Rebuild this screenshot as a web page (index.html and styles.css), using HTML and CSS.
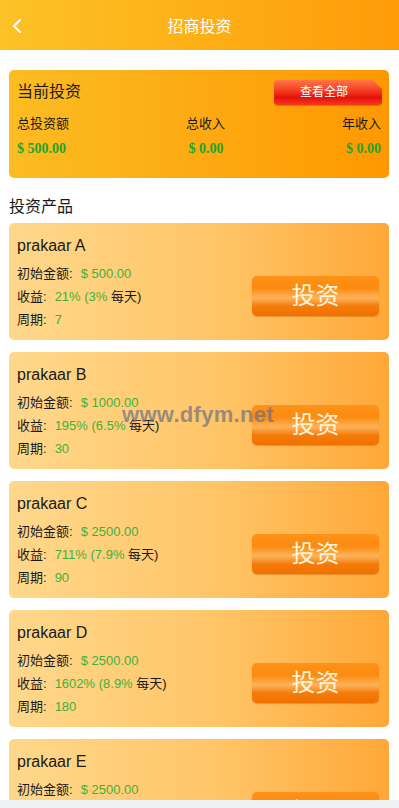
FILE: index.html
```html
<!DOCTYPE html>
<html lang="zh-CN">
<head>
<meta charset="utf-8">
<title>招商投资</title>
<link rel="stylesheet" href="styles.css">
</head>
<body>
<header class="topbar">
  <svg class="back" width="12" height="16" viewBox="0 0 12 16"><path d="M9 2 L3 8 L9 14" fill="none" stroke="#fff" stroke-width="2.2" stroke-linecap="round" stroke-linejoin="round"/></svg>
  <h1 class="title">招商投资</h1>
</header>
<main class="content">
  <section class="summary">
    <div class="summary-head">
      <span class="summary-title">当前投资</span>
      <a class="view-all">查看全部</a>
    </div>
    <div class="summary-row labels">
      <span class="lbl">总投资额</span>
      <span class="lbl">总收入</span>
      <span class="lbl">年收入</span>
    </div>
    <div class="summary-row">
      <span class="val">$ 500.00</span>
      <span class="val">$ 0.00</span>
      <span class="val">$ 0.00</span>
    </div>
  </section>
  <h2 class="section-title">投资产品</h2>
  <div class="products">
    <div class="product">
      <div class="p-name">prakaar A</div>
      <div class="p-body">
        <div class="p-info">
          <div class="p-row">初始金额:<span class="g">$ 500.00</span></div>
          <div class="p-row">收益:<span class="g">21% (3%</span> 每天)</div>
          <div class="p-row">周期:<span class="g">7</span></div>
        </div>
        <a class="invest">投资</a>
      </div>
    </div>
    <div class="product">
      <div class="p-name">prakaar B</div>
      <div class="p-body">
        <div class="p-info">
          <div class="p-row">初始金额:<span class="g">$ 1000.00</span></div>
          <div class="p-row">收益:<span class="g">195% (6.5%</span> 每天)</div>
          <div class="p-row">周期:<span class="g">30</span></div>
        </div>
        <a class="invest">投资</a>
      </div>
    </div>
    <div class="product">
      <div class="p-name">prakaar C</div>
      <div class="p-body">
        <div class="p-info">
          <div class="p-row">初始金额:<span class="g">$ 2500.00</span></div>
          <div class="p-row">收益:<span class="g">711% (7.9%</span> 每天)</div>
          <div class="p-row">周期:<span class="g">90</span></div>
        </div>
        <a class="invest">投资</a>
      </div>
    </div>
    <div class="product">
      <div class="p-name">prakaar D</div>
      <div class="p-body">
        <div class="p-info">
          <div class="p-row">初始金额:<span class="g">$ 2500.00</span></div>
          <div class="p-row">收益:<span class="g">1602% (8.9%</span> 每天)</div>
          <div class="p-row">周期:<span class="g">180</span></div>
        </div>
        <a class="invest">投资</a>
      </div>
    </div>
    <div class="product">
      <div class="p-name">prakaar E</div>
      <div class="p-body">
        <div class="p-info">
          <div class="p-row">初始金额:<span class="g">$ 2500.00</span></div>
          <div class="p-row">收益:<span class="g">2000% (10%</span> 每天)</div>
          <div class="p-row">周期:<span class="g">200</span></div>
        </div>
        <a class="invest">投资</a>
      </div>
    </div>
  </div>
</main>
<div class="watermark">www.dfym.net</div>
<div class="bottombar"></div>
</body>
</html>
```
FILE: styles.css
```css
* { box-sizing: border-box; }
html, body { margin: 0; padding: 0; }
body {
  font-family: "Liberation Sans", "Noto Sans CJK SC", sans-serif;
  color: #1a1a1a;
  background: #fff;
  width: 399px;
  height: 808px;
  overflow: hidden;
  position: relative;
}
.topbar {
  height: 50px;
  background: linear-gradient(90deg, #fcc228 0%, #fdb016 50%, #ff9b08 100%);
  display: flex;
  align-items: center;
  justify-content: center;
  position: relative;
}
.back { position: absolute; left: 11px; top: 18px; }
.title {
  margin: 0;
  font-size: 16px;
  font-weight: normal;
  color: #fff;
}
.content { padding: 20px 10px 0 9px; }
.summary {
  height: 108px;
  border-radius: 5px;
  background: linear-gradient(90deg, #fbbd22 0%, #fdaa12 50%, #ff9800 100%);
  padding: 10px 8px 0 8px;
}
.summary-head {
  display: flex;
  justify-content: space-between;
  align-items: center;
  height: 24px;
}
.summary-title { font-size: 16px; line-height: 24px; }
.view-all {
  position: relative;
  width: 108px;
  height: 25px;
  margin-right: -1px;
  border-radius: 4px 0 4px 4px;
  background: linear-gradient(180deg, #ff7648 0%, #f53a1e 45%, #e4110a 70%, #f53a1e 100%);
  color: #fff;
  font-size: 12px;
  line-height: 25px;
  text-align: center;
  padding-right: 8px;
  box-shadow: 0 1px 1px rgba(160, 30, 0, 0.35);
}
.view-all::after {
  content: "";
  position: absolute;
  right: 0;
  top: 0;
  width: 0;
  height: 0;
  border-top: 9px solid #fe9a06;
  border-left: 9px solid transparent;
}
.summary-row {
  display: flex;
  justify-content: space-between;
}
.labels { margin-top: 8px; }
.lbl { font-size: 13px; line-height: 24px; }
.val {
  font-family: "Liberation Serif", serif;
  font-weight: bold;
  font-size: 14px;
  color: #22a52c;
  line-height: 26px;
}
.section-title {
  margin: 0;
  font-size: 16px;
  font-weight: normal;
  line-height: 24px;
  padding-top: 17px;
  padding-bottom: 4px;
}
.products { display: flex; flex-direction: column; gap: 12px; }
.product {
  height: 117px;
  flex: none;
  border-radius: 5px;
  background: linear-gradient(90deg, #ffd88c 0%, #ffc567 55%, #ffa838 100%);
  padding: 11px 10px 0 8px;
}
.p-name { font-size: 16px; line-height: 24px; }
.p-body {
  display: flex;
  justify-content: space-between;
  align-items: center;
  margin-top: 4px;
}
.p-row { font-size: 13px; line-height: 23px; }
.g { color: #3db23a; margin-left: 8px; }
.invest {
  width: 127px;
  height: 40px;
  border-radius: 5px;
  background: linear-gradient(180deg, #ff9218 0%, #fb8a10 30%, #fdb35a 55%, #f57c0a 75%, #f07000 100%);
  color: #fff3d6;
  font-size: 24px;
  line-height: 40px;
  text-align: center;
  box-shadow: 0 1px 1px rgba(190, 90, 0, 0.4);
  margin-top: -2px;
}
.watermark {
  position: absolute;
  left: 122px;
  top: 402px;
  font-family: "Liberation Sans", sans-serif;
  font-weight: bold;
  font-size: 22px;
  color: rgba(110, 110, 130, 0.7);
  letter-spacing: 0.3px;
}
.bottombar {
  position: absolute;
  left: 0;
  right: 0;
  bottom: 0;
  height: 8px;
  background: #f0f1f3;
}
```
